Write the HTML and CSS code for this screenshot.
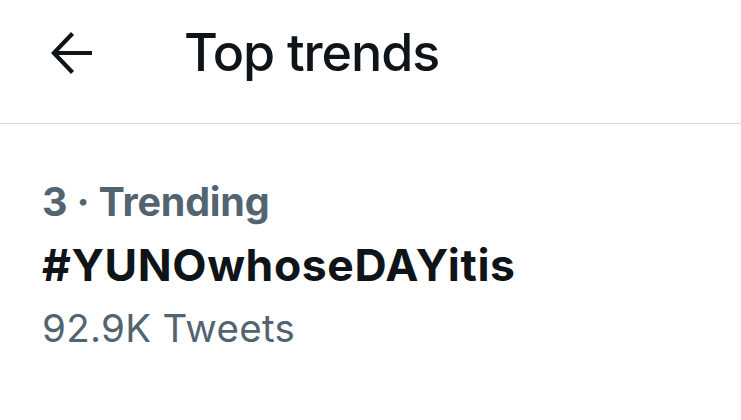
FILE: index.html
```html
<!DOCTYPE html>
<html>
<head>
<meta charset="utf-8">
<link rel="stylesheet" href="styles.css">
</head>
<body>
<header class="topbar">
  <button class="back" aria-label="Back">
    <svg width="42" height="42" viewBox="0 0 42 42"><path d="M3 21H41M21.5 1.5L2.8 21 21.5 40.5" fill="none" stroke="#0f1419" stroke-width="4.2"/></svg>
  </button>
  <h1 class="title">Top trends</h1>
</header>
<section class="trend">
  <div class="meta">3 · Trending</div>
  <div class="tag">#YUNOwhoseDAYitis</div>
  <div class="count">92.9K Tweets</div>
</section>
</body>
</html>
```
FILE: styles.css
```css
html, body { margin: 0; padding: 0; background: #fff; }
body { font-family: Inter, "Noto Sans", sans-serif; color: #0f1419; width: 741px; height: 420px; overflow: hidden; }
.topbar { display: flex; align-items: center; height: 124px; border-bottom: 1px solid #cfd9de; box-sizing: border-box; padding: 27px 0 44px; }
.back { background: none; border: 0; padding: 0; margin-left: 51px; width: 42px; height: 42px; display: flex; }
.title { margin: 0 0 0 91px; font-size: 52px; line-height: 52px; font-weight: 500; letter-spacing: -1.1px; }
.trend { padding: 48px 0 0 42px; }
.meta { font-size: 39.5px; font-weight: 700; color: #536471; line-height: 60px; letter-spacing: -0.2px; }
.tag { font-size: 44.5px; font-weight: 700; color: #0f1419; line-height: 67px; letter-spacing: 0.6px; }
.count { font-size: 38.5px; font-weight: 400; color: #536471; line-height: 59px; letter-spacing: 0.3px; }
```
